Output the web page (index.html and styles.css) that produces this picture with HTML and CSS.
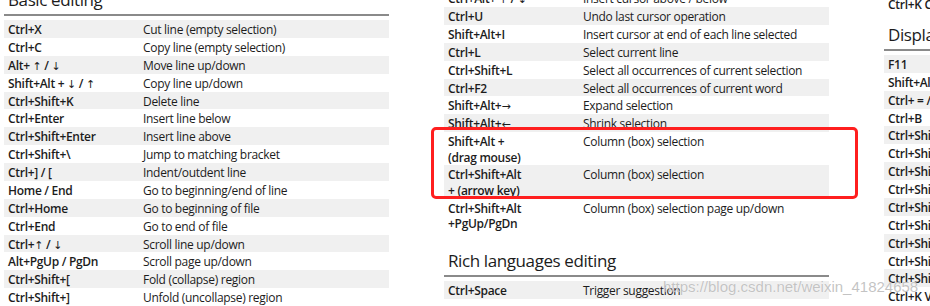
FILE: index.html
```html
<!DOCTYPE html>
<html lang="en">
<head>
<meta charset="utf-8">
<title>Keyboard shortcuts</title>
<link rel="stylesheet" href="styles.css">
</head>
<body>
<div class="page">
  <section class="col col-left">
    <h2 class="sec-title">Basic editing</h2>
    <div class="rows">
      <div class="row shade"><span class="key">Ctrl+X</span><span class="desc">Cut line (empty selection)</span></div>
      <div class="row"><span class="key">Ctrl+C</span><span class="desc">Copy line (empty selection)</span></div>
      <div class="row shade"><span class="key">Alt+ <span class="arr">↑</span> / <span class="arr">↓</span></span><span class="desc">Move line up/down</span></div>
      <div class="row"><span class="key">Shift+Alt + <span class="arr">↓</span> / <span class="arr">↑</span></span><span class="desc">Copy line up/down</span></div>
      <div class="row shade"><span class="key">Ctrl+Shift+K</span><span class="desc">Delete line</span></div>
      <div class="row"><span class="key">Ctrl+Enter</span><span class="desc">Insert line below</span></div>
      <div class="row shade"><span class="key">Ctrl+Shift+Enter</span><span class="desc">Insert line above</span></div>
      <div class="row"><span class="key">Ctrl+Shift+\</span><span class="desc">Jump to matching bracket</span></div>
      <div class="row shade"><span class="key">Ctrl+] / [</span><span class="desc">Indent/outdent line</span></div>
      <div class="row"><span class="key">Home / End</span><span class="desc">Go to beginning/end of line</span></div>
      <div class="row shade"><span class="key">Ctrl+Home</span><span class="desc">Go to beginning of file</span></div>
      <div class="row"><span class="key">Ctrl+End</span><span class="desc">Go to end of file</span></div>
      <div class="row shade"><span class="key">Ctrl+<span class="arr">↑</span> / <span class="arr">↓</span></span><span class="desc">Scroll line up/down</span></div>
      <div class="row"><span class="key">Alt+PgUp / PgDn</span><span class="desc">Scroll page up/down</span></div>
      <div class="row shade"><span class="key">Ctrl+Shift+[</span><span class="desc">Fold (collapse) region</span></div>
      <div class="row"><span class="key">Ctrl+Shift+]</span><span class="desc">Unfold (uncollapse) region</span></div>
    </div>
  </section>

  <section class="col col-mid">
    <div class="row"><span class="key">Ctrl+Alt+ <span class="arr">↑</span> / <span class="arr">↓</span></span><span class="desc">Insert cursor above / below</span></div>
    <div class="row shade"><span class="key">Ctrl+U</span><span class="desc">Undo last cursor operation</span></div>
    <div class="row"><span class="key">Shift+Alt+I</span><span class="desc">Insert cursor at end of each line selected</span></div>
    <div class="row shade"><span class="key">Ctrl+L</span><span class="desc">Select current line</span></div>
    <div class="row"><span class="key">Ctrl+Shift+L</span><span class="desc">Select all occurrences of current selection</span></div>
    <div class="row shade"><span class="key">Ctrl+F2</span><span class="desc">Select all occurrences of current word</span></div>
    <div class="row"><span class="key">Shift+Alt+<span class="arr">→</span></span><span class="desc">Expand selection</span></div>
    <div class="row shade"><span class="key">Shift+Alt+<span class="arr">←</span></span><span class="desc">Shrink selection</span></div>
    <div class="row"><span class="key">Shift+Alt +<br>(drag mouse)</span><span class="desc">Column (box) selection</span></div>
    <div class="row shade"><span class="key">Ctrl+Shift+Alt<br>+ (arrow key)</span><span class="desc">Column (box) selection</span></div>
    <div class="row"><span class="key">Ctrl+Shift+Alt<br>+PgUp/PgDn</span><span class="desc">Column (box) selection page up/down</span></div>

    <h2 class="sec-title sec-gap">Rich languages editing</h2>
    <div class="rows">
      <div class="row shade"><span class="key">Ctrl+Space</span><span class="desc">Trigger suggestion</span></div>
    </div>
  </section>

  <section class="col col-right">
    <div class="row"><span class="key">Ctrl+K Ctrl+X</span><span class="desc">Trim trailing whitespace</span></div>
    <h2 class="sec-title sec-gap-sm">Display</h2>
    <div class="rows">
      <div class="row shade"><span class="key">F11</span><span class="desc">Toggle full screen</span></div>
      <div class="row"><span class="key">Shift+Alt+0</span><span class="desc">Toggle editor layout</span></div>
      <div class="row shade"><span class="key">Ctrl+ = / -</span><span class="desc">Zoom in/out</span></div>
      <div class="row"><span class="key">Ctrl+B</span><span class="desc">Toggle Sidebar visibility</span></div>
      <div class="row shade"><span class="key">Ctrl+Shift+E</span><span class="desc">Show Explorer</span></div>
      <div class="row"><span class="key">Ctrl+Shift+F</span><span class="desc">Show Search</span></div>
      <div class="row shade"><span class="key">Ctrl+Shift+G</span><span class="desc">Show Source Control</span></div>
      <div class="row"><span class="key">Ctrl+Shift+D</span><span class="desc">Show Debug</span></div>
      <div class="row shade"><span class="key">Ctrl+Shift+X</span><span class="desc">Show Extensions</span></div>
      <div class="row"><span class="key">Ctrl+Shift+H</span><span class="desc">Replace in files</span></div>
      <div class="row shade"><span class="key">Ctrl+Shift+J</span><span class="desc">Toggle Search details</span></div>
      <div class="row"><span class="key">Ctrl+Shift+U</span><span class="desc">Show Output panel</span></div>
      <div class="row shade"><span class="key">Ctrl+Shift+V</span><span class="desc">Open Markdown preview</span></div>
      <div class="row"><span class="key">Ctrl+K V</span><span class="desc">Open Markdown preview to the side</span></div>
    </div>
  </section>
</div>

<div class="highlight"></div>
<div class="watermark">https://blog.csdn.net/weixin_41824658</div>
</body>
</html>
```
FILE: styles.css
```css
html, body {
  margin: 0;
  padding: 0;
}

body {
  width: 930px;
  height: 306px;
  overflow: hidden;
  position: relative;
  background: #ffffff;
  color: #1c1c1c;
  font-family: "Open Sans", "Noto Sans", sans-serif;
}

.page {
  display: flex;
  gap: 55px;
  padding-left: 4px;
}

.col {
  width: 385px;
  flex: none;
}

.col-left {
  margin-top: -11px;
}

.col-mid {
  margin-top: -10.8px;
}

.col-right {
  margin-top: -5px;
}

.sec-title {
  margin: 0;
  padding: 0 0 3px 4px;
  font-size: 17px;
  font-weight: 400;
  line-height: 22px;
  letter-spacing: -0.4px;
  white-space: nowrap;
  border-bottom: 2px solid #8a8a8a;
}

.sec-gap {
  margin-top: 18px;
}

.sec-gap-sm {
  margin-top: 11px;
}

.rows {
  margin-top: 4px;
}

.row {
  display: flex;
  padding: 2px 4px 0;
  font-size: 12px;
  line-height: 15.87px;
  letter-spacing: -0.3px;
  white-space: nowrap;
}

.row.shade {
  background: #f0f0f0;
}

.key {
  width: 135px;
  flex: none;
  font-weight: 600;
  line-height: 15.6px;
}

.desc {
  flex: 1;
}

.arr {
  font-family: "DejaVu Sans", sans-serif;
  font-weight: 400;
  font-size: 11px;
  line-height: 0;
}

.highlight {
  position: absolute;
  left: 431px;
  top: 127px;
  width: 427px;
  height: 72px;
  box-sizing: border-box;
  border: 3px solid #ff1f1f;
  border-radius: 5px;
}

.watermark {
  position: absolute;
  left: 663px;
  top: 278px;
  font-family: "Liberation Sans", Arial, sans-serif;
  font-size: 15px;
  line-height: 18px;
  color: rgba(185, 185, 185, 0.85);
  text-shadow: 0 0 1px rgba(255, 255, 255, 0.9);
  white-space: nowrap;
}
```
